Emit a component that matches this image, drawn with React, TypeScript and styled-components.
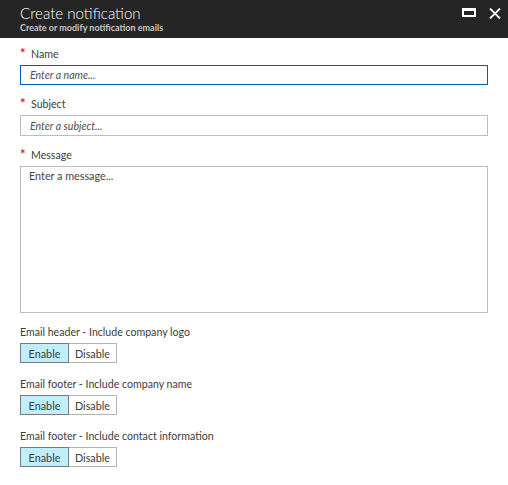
import React from "react";
import styled, { createGlobalStyle } from "styled-components";

const Global = createGlobalStyle`
  html, body { margin: 0; padding: 0; background: #fff; }
  body { font-family: Lato, "Open Sans", sans-serif; }
  * { box-sizing: border-box; }
`;

const Page = styled.div`
  width: 508px;
  height: 485px;
  background: #fff;
  display: flex;
  flex-direction: column;
`;

const Header = styled.div`
  height: 38px;
  background: #252525;
  display: flex;
  align-items: flex-start;
  justify-content: space-between;
  padding: 0 7px 0 20px;
`;

const Titles = styled.div`
  display: flex;
  flex-direction: column;
`;

const Title = styled.div`
  color: #fff;
  font-size: 15.1px;
  font-weight: 300;
  line-height: 18px;
  margin-top: 4px;
`;

const Subtitle = styled.div`
  color: #c8c8c8;
  font-size: 9px;
  font-weight: 700;
  line-height: 11px;
`;

const Controls = styled.div`
  display: flex;
  align-items: flex-start;
  gap: 13px;
  margin-top: 8px;
`;

const Body = styled.div`
  padding: 10px 20px 0 20px;
  display: flex;
  flex-direction: column;
`;

const Field = styled.div<{ $gap: number }>`
  display: flex;
  flex-direction: column;
  margin-bottom: ${(p) => p.$gap}px;
`;

const Label = styled.div`
  font-size: 10.6px;
  color: #3c3c3c;
  line-height: 12px;
  height: 12px;
  margin-bottom: 5px;
  display: flex;
  align-items: flex-start;
`;

const Star = styled.span`
  color: #e81123;
  width: 11px;
  font-size: 13px;
  font-weight: 700;
  line-height: 12px;
  position: relative;
  top: -1px;
`;

const Input = styled.div<{ $focused?: boolean }>`
  width: 468px;
  height: ${(p) => (p.$focused ? 20 : 21)}px;
  border: 1px solid ${(p) => (p.$focused ? "#0559b2" : "#bdbdbd")};
  font-size: 10.6px;
  font-style: italic;
  color: #505050;
  padding: 0 0 0 9px;
  display: flex;
  align-items: center;
`;

const TextArea = styled.div`
  width: 468px;
  height: 147px;
  border: 1px solid #bdbdbd;
  font-size: 10.8px;
  line-height: 13px;
  color: #444;
  padding: 2px 0 0 8px;
`;

const Toggle = styled.div`
  display: flex;
`;

const ToggleButton = styled.div<{ $active?: boolean }>`
  width: ${(p) => (p.$active ? 49 : 48)}px;
  height: 20px;
  border: 1px solid ${(p) => (p.$active ? "#7a7a7a" : "#b4b4b4")};
  ${(p) => (p.$active ? "" : "border-left: none;")}
  background: ${(p) => (p.$active ? "#c0eefa" : "#fff")};
  font-size: 10.8px;
  color: #3c3c3c;
  display: flex;
  align-items: center;
  justify-content: center;
`;

const IconButton = styled.div`
  display: flex;
  align-items: center;
  justify-content: center;
`;

function ToggleField({ label, gap }: { label: string; gap: number }) {
  return (
    <Field $gap={gap}>
      <Label>{label}</Label>
      <Toggle>
        <ToggleButton $active>Enable</ToggleButton>
        <ToggleButton>Disable</ToggleButton>
      </Toggle>
    </Field>
  );
}

export default function App() {
  return (
    <Page>
      <Global />
      <Header>
        <Titles>
          <Title>Create notification</Title>
          <Subtitle>Create or modify notification emails</Subtitle>
        </Titles>
        <Controls>
          <IconButton>
            <svg width="14" height="9" viewBox="0 0 14 9">
              <rect x="0" y="0" width="14" height="9" fill="#fff" />
              <rect x="2" y="3" width="10" height="4" fill="#252525" />
            </svg>
          </IconButton>
          <IconButton>
            <svg width="12" height="11" viewBox="0 0 12 11">
              <path d="M1 0.5 L11 10.5 M11 0.5 L1 10.5" stroke="#fff" strokeWidth="1.8" />
            </svg>
          </IconButton>
        </Controls>
      </Header>
      <Body>
        <Field $gap={13}>
          <Label><Star>*</Star>Name</Label>
          <Input $focused>Enter a name...</Input>
        </Field>
        <Field $gap={13}>
          <Label><Star>*</Star>Subject</Label>
          <Input>Enter a subject...</Input>
        </Field>
        <Field $gap={13}>
          <Label><Star>*</Star>Message</Label>
          <TextArea>Enter a message...</TextArea>
        </Field>
        <ToggleField gap={15} label="Email header - Include company logo" />
        <ToggleField gap={15} label="Email footer - Include company name" />
        <ToggleField gap={15} label="Email footer - Include contact information" />
      </Body>
    </Page>
  );
}
